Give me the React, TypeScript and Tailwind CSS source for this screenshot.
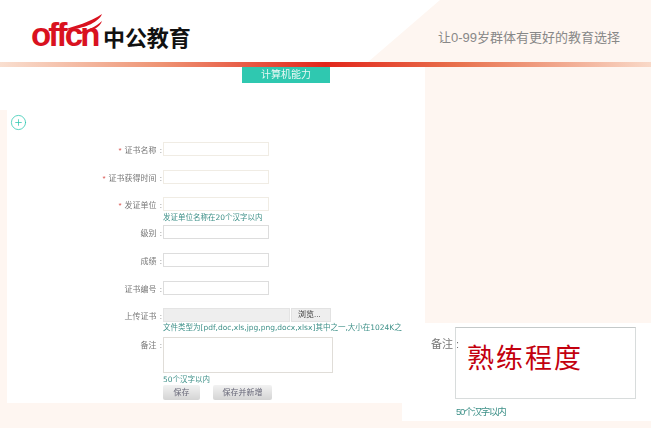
import { CirclePlus } from "lucide-react";

const font = "font-['Liberation_Sans','Noto_Sans_CJK_SC',sans-serif]";

function Label({ text, req }: { text: string; req?: boolean }) {
  return (
    <div className="w-[156px] shrink-0 pr-[1px] pt-[2px] text-right text-[8px] leading-[14px] text-[#777] blur-[0.4px] whitespace-nowrap">
      {req && <span className="text-[#d9534f] mr-[3px]">*</span>}
      {text}
      <span className="ml-[1px]"> :</span>
    </div>
  );
}

function Row({ text, req, gray }: { text: string; req?: boolean; gray?: boolean }) {
  return (
    <div className="flex h-[14px] items-start">
      <Label text={text} req={req} />
      <div className={gray ? "h-[14px] w-[106px] border border-[#ddd] bg-white" : "h-[14px] w-[106px] border border-[#f0ece4] bg-white"} />
    </div>
  );
}

function Hint({ text }: { text: string }) {
  return <div className="ml-[156px] font-['DejaVu_Sans','Noto_Sans_CJK_SC',sans-serif] text-[7.5px] leading-[10px] text-[#3d9088] blur-[0.35px] whitespace-nowrap">{text}</div>;
}

export default function App() {
  return (
    <div className={`relative h-[428px] w-[651px] overflow-hidden bg-[#fef6f1] ${font}`}>
      <svg className="absolute left-0 top-0" width="651" height="62" aria-hidden="true">
        <polygon points="0,0 440,0 368,62 0,62" fill="#ffffff" />
      </svg>

      <header className="relative flex h-[62px] items-start justify-between pl-[31px] pr-[31px]">
        <div className="relative mt-[13px] flex items-start">
          <span className="relative mt-[5px] w-[70px] text-[33px] font-bold leading-[34px] tracking-[-2.8px] text-[#d9121f]">offcn</span>
          <svg className="absolute left-[28px] top-0" width="46" height="24" viewBox="0 0 46 24" aria-hidden="true">
            <path d="M1 18 C 16 13 32 9 43 1 C 40 9 26 15 14 16 C 10 16.5 5 17 1 18Z" fill="#d9121f" />
            <path d="M19 20 C 28 17 37 14 43 8 C 41 14 33 18 26 20Z" fill="#d9121f" />
          </svg>
          <span className="relative ml-[2px] mt-[11px] font-['Noto_Sans_CJK_SC',sans-serif] text-[22px] font-bold leading-[24px] tracking-[-0.1px] text-[#111]">中公教育</span>
        </div>
        <div className="relative mt-[29px] text-[13px] leading-[18px] text-[#888]">让0-99岁群体有更好的教育选择</div>
      </header>

      <div className="relative h-[5px] bg-[linear-gradient(90deg,#f9dfd0_0%,#ee9272_25%,#e2261b_50%,#e8704c_70%,#f9d9c8_100%)]" />

      <div className="relative flex h-[336px]">
        <div className="flex w-[7px] flex-col">
          <div className="h-[43px] bg-white" />
        </div>
        <main className="w-[418px] bg-white">
          <div className="ml-[235px] h-[16px] w-[88px] bg-[#2fc8b0] text-center text-[10px] leading-[16px] text-[#e8f8f5] blur-[0.3px]">计算机能力</div>
          <div className="ml-[4px] mt-[33px] h-[15px]">
            <CirclePlus size={17} strokeWidth={1.1} className="text-[#2fc8b0] -mt-[2px] -ml-[1px]" />
          </div>
          <form className="mt-[12px] flex flex-col pt-[1px]">
            <Row text="证书名称" req />
            <div className="h-[14px]" />
            <Row text="证书获得时间" req />
            <div className="h-[13px]" />
            <Row text="发证单位" req />
            <div className="mt-[2px]"><Hint text="发证单位名称在20个汉字以内" /></div>
            <div className="mt-[2px]"><Row text="级别" gray /></div>
            <div className="h-[14px]" />
            <Row text="成绩" gray />
            <div className="h-[14px]" />
            <Row text="证书编号" gray />
            <div className="h-[13px]" />
            <div className="flex h-[14px]">
              <Label text="上传证书" />
              <div className="h-[14px] w-[127px] border border-[#e4e4e4] bg-[#eeeeee]" />
              <div className="ml-[1px] h-[14px] w-[40px] border border-[#e2e2e2] bg-[#eeeeee] pl-[6px] text-[8px] leading-[12px] text-[#333] blur-[0.3px]">浏览...</div>
            </div>
            <div className="mt-[1px]"><Hint text="文件类型为[pdf,doc,xls,jpg,png,docx,xlsx]其中之一,大小在1024K之内" /></div>
            <div className="mt-[4px] flex">
              <Label text="备注" />
              <div className="h-[36px] w-[170px] border border-[#e0ddd8] bg-white" />
            </div>
            <div className="mt-[2px]"><Hint text="50个汉字以内" /></div>
            <div className="ml-[156px] flex gap-[13px]">
              <button type="button" className="h-[15px] w-[37px] rounded-[2px] bg-[linear-gradient(180deg,#f2f2f2,#d4d4d4)] text-[8px] leading-[15px] text-[#667] blur-[0.3px]">保存</button>
              <button type="button" className="h-[15px] w-[59px] rounded-[2px] bg-[linear-gradient(180deg,#f2f2f2,#d4d4d4)] text-[8px] leading-[15px] text-[#667] blur-[0.3px]">保存并新增</button>
            </div>
          </form>
        </main>
      </div>

      <aside className="absolute left-[402px] top-[323px] flex h-[98px] w-[249px] flex-col bg-white pt-[4px]">
        <div className="absolute left-[29px] top-[13px] text-[11px] leading-[16px] text-[#777] blur-[0.35px]">备注 :</div>
        <div className="ml-[53px] h-[72px] w-[181px] border border-[#d8dcdc] border-t-[#c4c9c9] bg-white pl-[11px] pt-[13px] text-[27px] leading-[36px] tracking-[2px] text-[#c3000e]">熟练程度</div>
        <div className="ml-[54px] mt-[6px] text-[9.5px] leading-[14px] tracking-[-1.2px] text-[#3d9088] blur-[0.3px]">50个汉字以内</div>
      </aside>
    </div>
  );
}
